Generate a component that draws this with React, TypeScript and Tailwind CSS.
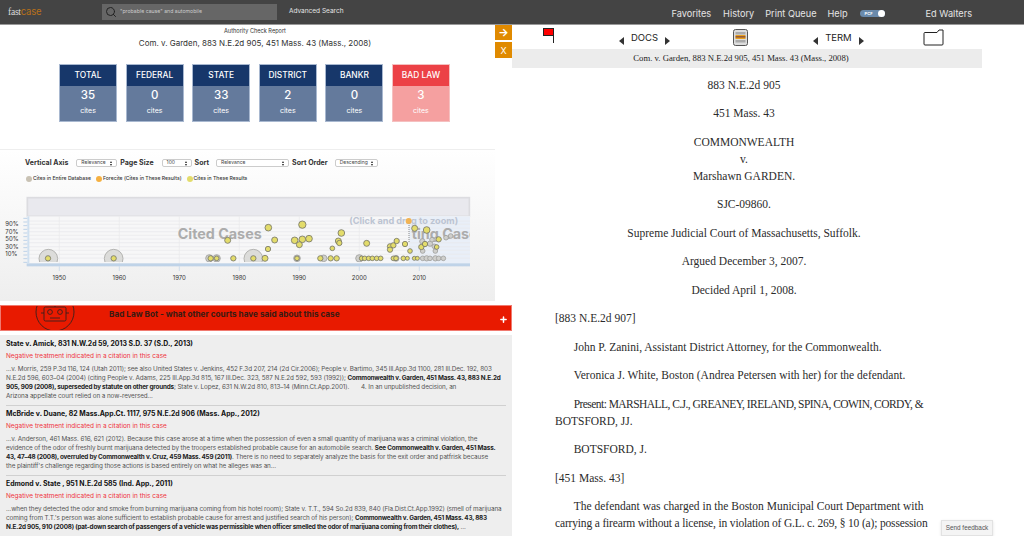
import React from 'react';
import { Search, Plus } from 'lucide-react';

const SANS = 'font-["Inter","Liberation_Sans",sans-serif]';

const tiles = [
  { label: 'TOTAL', count: 35 },
  { label: 'FEDERAL', count: 0 },
  { label: 'STATE', count: 33 },
  { label: 'DISTRICT', count: 2 },
  { label: 'BANKR', count: 0 },
  { label: 'BAD LAW', count: 3, bad: true },
];

// chart coordinates are in 3x px, the viewBox scales them back down
const yellow: [number, number, number][] = [
  [144, 334, 8], [341, 334, 8], [760, 334, 8], [632, 334, 8], [650, 334, 7], [700, 334, 8],
  [683, 280, 9], [805, 242, 10], [824, 279, 9], [804, 306, 8], [795, 334, 9],
  [907, 233, 11], [884, 280, 10], [907, 277, 10], [927, 275, 10], [898, 293, 9], [891, 334, 7],
  [1024, 258, 10], [1015, 282, 9], [1018, 288, 8], [997, 304, 7], [961, 334, 8], [992, 334, 8], [1010, 334, 8],
  [1100, 289, 9], [1170, 298, 8], [1170, 308, 8], [1180, 295, 8], [1190, 282, 8], [1215, 291, 8], [1230, 312, 7],
  [1244, 244, 9], [1280, 249, 10], [1264, 300, 8], [1275, 291, 8], [1316, 277, 8], [1310, 300, 7],
  [1085, 334, 7], [1094, 334, 7], [1106, 334, 7], [1117, 334, 7], [1130, 334, 7], [1142, 334, 7],
  [1180, 334, 7], [1188, 334, 7], [1210, 334, 7], [1222, 334, 6], [1243, 334, 6], [1252, 334, 6],
];

const gray: [number, number, number][] = [
  [628, 334, 11], [650, 334, 11], [891, 334, 10], [971, 334, 10], [1078, 334, 11], [1188, 334, 9],
  [1268, 334, 7], [1280, 334, 8], [1290, 334, 7], [1306, 334, 8], [1316, 334, 7], [1330, 334, 7],
  [1267, 283, 8], [1268, 312, 7], [1290, 290, 8], [1296, 278, 7], [1306, 312, 7], [1303, 298, 7], [1338, 272, 7], [1352, 267, 7],
];

const ChartSvg = () => (
  <svg viewBox="0 135 1536 330" width={512} height={110} className="block" style={{ fontFamily: 'Inter, sans-serif' }}>
    <defs>
      <clipPath id="plot">
        <rect x="80" y="208" width="1330" height="137" />
      </clipPath>
    </defs>
    <rect x="82" y="152" width="1326" height="56" fill="#e9e9ee" stroke="#dcdce0" strokeWidth="5" />
    <rect x="80" y="208" width="1330" height="142" fill="#f7f7f8" />
    <rect x="1227" y="208" width="183" height="142" fill="#e9eff8" />
    {[222, 232, 243, 254, 265, 276, 287, 299, 310, 322, 333].map(y => (
      <line key={y} x1="80" x2="1410" y1={y} y2={y} stroke="#e8e9ec" strokeWidth="2" />
    ))}
    {[178, 358, 538, 718, 898, 1078, 1258].map(x => (
      <line key={x} x1={x} x2={x} y1="208" y2="350" stroke="#e8e9ec" strokeWidth="2" />
    ))}
    <text x="533" y="277" fontSize="43" fontWeight="700" fill="#acacac">Cited Cases</text>
    <text x="1235" y="277" fontSize="43" fontWeight="700" fill="#acacac" clipPath="url(#plot)">ting Cases</text>
    <text x="1048" y="232" fontSize="27.5" fontWeight="700" fill="#bcc4d2">(Click and drag to zoom)</text>
    <line x1="1227" x2="1227" y1="222" y2="285" stroke="#777" strokeWidth="2.5" strokeDasharray="3 3" />
    <g clipPath="url(#plot)">
      {[145, 341, 760].map(x => (
        <circle key={x} cx={x} cy={335} r={28} fill="#dcdcda" stroke="#a9a9a7" strokeWidth="2.5" />
      ))}
      {gray.map(([x, y, r]) => (
        <circle key={`${x}-${y}`} cx={x} cy={y} r={r} fill="#cfcfcc" stroke="#a0a09e" strokeWidth="2.5" />
      ))}
      {yellow.map(([x, y, r]) => (
        <circle key={`${x}-${y}`} cx={x} cy={y} r={r} fill="#e3dc6b" stroke="#77776a" strokeWidth="2.5" />
      ))}
      <circle cx="1226" cy="222" r="9" fill="#f2b352" />
    </g>
    <rect x="80" y="349" width="1330" height="9" fill="#bfd3e8" />
    <rect x="82" y="208" width="6" height="142" fill="#cfe0f0" />
    {[214, 225, 236, 247, 258, 269, 280, 291, 302, 313, 324, 335, 346].map(y => (
      <line key={y} x1="70" x2="82" y1={y} y2={y} stroke="#bdd2e8" strokeWidth="3" />
    ))}
    {[['90%', 237], ['70%', 260], ['50%', 282], ['30%', 305], ['10%', 328]].map(([t, y]) => (
      <text key={t} x="16" y={y} fontSize="18" fill="#333">{t}</text>
    ))}
    {[178, 358, 538, 718, 898, 1078, 1258].map((x, i) => (
      <g key={x}>
        <line x1={x} x2={x} y1="358" y2="372" stroke="#bfd3e8" strokeWidth="2" />
        <text x={x} y="399" fontSize="18" fill="#333" textAnchor="middle">{1950 + i * 10}</text>
      </g>
    ))}
  </svg>
);

const Sel = ({ text, w }: { text: string; w: string }) => (
  <div className={`${w} h-[8px] flex items-center justify-between px-1 border border-[#ccc] rounded-[2px] bg-white text-[5px] font-normal text-[#444]`}>
    <span>{text}</span>
    <span className="flex flex-col gap-[1px]">
      <span className="w-0 h-0 border-x-[1.5px] border-x-transparent border-b-[2px] border-b-[#222]" />
      <span className="w-0 h-0 border-x-[1.5px] border-x-transparent border-t-[2px] border-t-[#222]" />
    </span>
  </div>
);

const Legend = ({ color, label }: { color: string; label: string }) => (
  <div className="flex items-center gap-[1px] text-[5.1px] font-medium text-[#333]">
    <span className={`w-[6px] h-[6px] rounded-full ${color}`} />
    {label}
  </div>
);

const Triangle = ({ dir }: { dir: 'l' | 'r' }) =>
  dir === 'l' ? (
    <span className="block mt-[7px] w-0 h-0 border-y-[4px] border-y-transparent border-r-[5px] border-r-[#333]" />
  ) : (
    <span className="block mt-[7px] w-0 h-0 border-y-[4px] border-y-transparent border-l-[5px] border-l-[#333]" />
  );

const Cite = ({ children }: { children: React.ReactNode }) => (
  <b className="text-[#222] tracking-[-0.2px]">{children}</b>
);

const Case = ({ title, children }: { title: string; children: React.ReactNode }) => (
  <div className="border-b border-[#d0d0d0] pb-[4px] mb-[3px] mr-[6px]">
    <h3 className="text-[6.9px] leading-[10px] font-bold text-[#111]">{title}</h3>
    <p className="text-[6.45px] leading-[9px] text-[#ee3340] mt-[3px]">Negative treatment indicated in a citation in this case</p>
    <p className="text-[6.35px] leading-[9px] tracking-[-0.1px] text-[#555] mt-[4px]">{children}</p>
  </div>
);

const Para = ({ children, className = '' }: { children: React.ReactNode; className?: string }) => (
  <p className={`mb-[11.5px] ${className}`}>{children}</p>
);

export default function App() {
  return (
    <div className={`relative w-[1024px] h-[536px] overflow-hidden bg-white ${SANS}`}>
      {/* top bar */}
      <header className="h-[25px] bg-[#444] border-b border-[#999] flex items-center text-[#e4e4e4]">
        <div className="w-[102px] pl-[8px] text-[9.5px] leading-none tracking-tight">
          <span className="font-['Liberation_Serif',serif] text-[#ddd]">fast</span>
          <span className="text-[#b8701a]">case</span>
        </div>
        <div className="w-[175px] h-[16px] bg-[#666] flex items-center pl-[3px] gap-[3px] text-[5.2px] text-[#ccc]">
          <Search size={12} strokeWidth={2} className="text-[#222]" />
          "probable cause" and automobile
        </div>
        <span className="ml-[12px] text-[6.5px]">Advanced Search</span>
        <nav className="ml-auto pt-[4px] flex items-center text-[9.2px]">
          <span>Favorites</span>
          <span className="ml-[12px]">History</span>
          <span className="ml-[11px]">Print Queue</span>
          <span className="ml-[11px]">Help</span>
          <span className="ml-[12px] w-[25px] h-[7px] rounded-full bg-[#6a8aac] flex items-center justify-between pl-[5px] text-[4px] font-bold text-white">
            PCF
            <span className="w-[7px] h-[7px] rounded-full bg-white" />
          </span>
          <span className="ml-[41px] mr-[52px]">Ed Walters</span>
        </nav>
      </header>

      <div className="flex">
        {/* left pane */}
        <div className="w-[512px] shrink-0">
          <div className="text-center pr-[2px] pt-[1px] text-[#333]">
            <p className="text-[5.6px] leading-[8px] mt-[1px]">Authority Check Report</p>
            <p className="text-[8px] leading-[12px] mt-[2px]">Com. v. Garden, 883 N.E.2d 905, 451 Mass. 43 (Mass., 2008)</p>
          </div>
          <div className="flex gap-[8.6px] ml-[59px] mt-[15px]">
            {tiles.map(t => (
              <div key={t.label} className={`w-[58px] h-[58px] text-center text-white border ${t.bad ? 'border-[#f5c0c0]' : 'border-[#a8b8d0]'}`}>
                <div className={`h-[21px] flex items-center justify-center text-[8.4px] font-medium ${t.bad ? 'bg-[#ec4146]' : 'bg-[#17376a]'}`}>{t.label}</div>
                <div className={`h-[35px] pt-[2px] ${t.bad ? 'bg-[#f5a0a0]' : 'bg-[#647a9c]'}`}>
                  <div className="text-[11.5px] font-medium leading-[14px]">{t.count}</div>
                  <div className="text-[7px] leading-[10px] mt-[4px]">cites</div>
                </div>
              </div>
            ))}
          </div>

          {/* chart */}
          <div className="mt-[27px] h-[152px] border-t border-[#eee] bg-gradient-to-b from-white to-[#eeeeee] w-[495px] overflow-hidden">
            <div className="flex items-center h-[10px] mt-[8px] ml-[25px] text-[7px] font-bold text-[#333] whitespace-nowrap">
              <span>Vertical Axis</span>
              <Sel text="Relevance" w="w-[41px] ml-[8px]" />
              <span className="ml-[3px]">Page Size</span>
              <Sel text="100" w="w-[30px] ml-[8px]" />
              <span className="ml-[3px]">Sort</span>
              <Sel text="Relevance" w="w-[73px] ml-[7px]" />
              <span className="ml-[3px]">Sort Order</span>
              <Sel text="Descending" w="w-[43px] ml-[7px]" />
            </div>
            <div className="flex items-center gap-[5px] ml-[26px] mt-[7px] whitespace-nowrap">
              <Legend color="bg-[#c9c2b4]" label="Cites in Entire Database" />
              <Legend color="bg-[#f5b041]" label="Forecite (Cites in These Results)" />
              <Legend color="bg-[#e3dc6b]" label="Cites in These Results" />
            </div>
            <div className="mt-[9px]">
              <ChartSvg />
            </div>
          </div>

          {/* bad law bot */}
          <div className="mt-[4px] h-[26px] bg-[#e81a00] border border-[#f07a70] flex items-center relative overflow-hidden">
            <svg viewBox="0 0 44 44" width={44} height={44} className="absolute left-[32px] top-[-16px]" fill="none" stroke="#222" strokeWidth="0.8">
              <circle cx="22" cy="22" r="19" />
              <rect x="11" y="17" width="22" height="14" rx="1.5" />
              <circle cx="17" cy="22" r="2.4" />
              <circle cx="27" cy="22" r="2.4" />
              <line x1="17" x2="27" y1="28" y2="28" />
              <line x1="22" x2="22" y1="13" y2="17" />
              <line x1="8" x2="11" y1="23" y2="23" />
              <line x1="33" x2="36" y1="23" y2="23" />
            </svg>
            <span className="ml-[108px] -mt-[7px] text-[8.2px] font-bold text-[#3a1a12]">Bad Law Bot - what other courts have said about this case</span>
            <Plus size={9} strokeWidth={4} className="absolute right-[3px] top-[9px] text-white" />
          </div>

          {/* results */}
          <div className="mt-[4px] h-[300px] bg-[#eeeeee] pl-[6px] pt-[4px]">
            <Case title="State v. Amick, 831 N.W.2d 59, 2013 S.D. 37 (S.D., 2013)">
              ...v. Morris, 259 P.3d 116, 124 (Utah 2011); see also United States v. Jenkins, 452 F.3d 207, 214 (2d Cir.2006); People v. Bartimo, 345 Ill.App.3d 1100, 281 Ill.Dec. 192, 803 N.E.2d 596, 603–04 (2004) (citing People v. Adams, 225 Ill.App.3d 815, 167 Ill.Dec. 323, 587 N.E.2d 592, 593 (1992)); <Cite>Commonwealth v. Garden, 451 Mass. 43, 883 N.E.2d 905, 909 (2008), superseded by statute on other grounds</Cite>; State v. Lopez, 631 N.W.2d 810, 813–14 (Minn.Ct.App.2001). &nbsp; &nbsp; &nbsp; 4. In an unpublished decision, an<br />Arizona appellate court relied on a now-reversed...
            </Case>
            <Case title="McBride v. Duane, 82 Mass.App.Ct. 1117, 975 N.E.2d 906 (Mass. App., 2012)">
              ...v. Anderson, 461 Mass. 616, 621 (2012). Because this case arose at a time when the possession of even a small quantity of marijuana was a criminal violation, the<br />evidence of the odor of freshly burnt marijuana detected by the troopers established probable cause for an automobile search. <Cite>See Commonwealth v. Garden, 451 Mass.<br />43, 47–48 (2008), overruled by Commonwealth v. Cruz, 459 Mass. 459 (2011)</Cite>. There is no need to separately analyze the basis for the exit order and patfrisk because<br />the plaintiff's challenge regarding those actions is based entirely on what he alleges was an...
            </Case>
            <Case title="Edmond v. State , 951 N.E.2d 585 (Ind. App., 2011)">
              ...when they detected the odor and smoke from burning marijuana coming from his hotel room); State v. T.T., 594 So.2d 839, 840 (Fla.Dist.Ct.App.1992) (smell of marijuana coming from T.T.'s person was alone sufficient to establish probable cause for arrest and justified search of his person); <Cite>Commonwealth v. Garden, 451 Mass. 43, 883 N.E.2d 905, 910 (2008) (pat-down search of passengers of a vehicle was permissible when officer smelled the odor of marijuana coming from their clothes),</Cite> ...
            </Case>
          </div>
        </div>

        {/* document pane */}
        <div className="flex-1 min-w-0">
          <div className="h-[24px] w-[470px] flex items-center text-[9.5px] text-[#222]">
            <svg viewBox="0 0 12 16" width={12} height={16} className="ml-[31px] -mt-[2px]">
              <rect x="0.5" y="0.5" width="10" height="7" fill="#f00" stroke="#222" />
              <line x1="10.5" x2="10.5" y1="0" y2="15" stroke="#222" />
            </svg>
            <span className="ml-[64px]"><Triangle dir="l" /></span>
            <span className="ml-[7px] mt-[2px]">DOCS</span>
            <span className="ml-[7px]"><Triangle dir="r" /></span>
            <svg viewBox="0 0 15 17" width={15} height={17} className="ml-[63px]">
              <rect x="0.5" y="0.5" width="14" height="16" rx="2" fill="#ddd" stroke="#555" />
              <rect x="2.5" y="3" width="10" height="2.5" fill="#aaa" />
              <rect x="2.5" y="6" width="10" height="4" fill="#e8a020" />
              <rect x="2.5" y="7.4" width="10" height="1" fill="#634" />
              <rect x="2.5" y="11" width="10" height="2.5" fill="#aaa" />
            </svg>
            <span className="ml-[65px]"><Triangle dir="l" /></span>
            <span className="ml-[7px] mt-[2px]">TERM</span>
            <span className="ml-[7px]"><Triangle dir="r" /></span>
            <svg viewBox="0 0 21 17" width={21} height={17} className="ml-[59px]" fill="none" stroke="#222">
              <path d="M2 3.5h12l2-2.5h4v14a1 1 0 0 1-1 1H2a1 1 0 0 1-1-1V4.5a1 1 0 0 1 1-1z" />
            </svg>
          </div>
          <div className="h-[19px] w-[470px] pr-[12px] bg-[#ececec] flex items-center justify-center font-['Liberation_Serif',serif] text-[8.7px] text-[#222]">
            Com. v. Garden, 883 N.E.2d 905, 451 Mass. 43 (Mass., 2008)
          </div>
          <div className="w-[373px] ml-[43px] mt-[8.5px] font-['Liberation_Serif',serif] text-[11.5px] leading-[17px] text-[#2b2b2b]">
            <div className="text-center pl-[5px]">
              <Para>883 N.E.2d 905</Para>
              <Para>451 Mass. 43</Para>
              <Para>COMMONWEALTH<br />v.<br />Marshawn GARDEN.</Para>
              <Para>SJC-09860.</Para>
              <Para>Supreme Judicial Court of Massachusetts, Suffolk.</Para>
              <Para>Argued December 3, 2007.</Para>
              <Para>Decided April 1, 2008.</Para>
            </div>
            <Para>[883 N.E.2d 907]</Para>
            <Para className="indent-[18.7px]">John P. Zanini, Assistant District Attorney, for the Commonwealth.</Para>
            <Para className="indent-[18.7px]">Veronica J. White, Boston (Andrea Petersen with her) for the defendant.</Para>
            <Para className="indent-[18.7px] whitespace-nowrap">
              <span className="tracking-[-0.55px]">Present: MARSHALL, C.J., GREANEY, IRELAND, SPINA, COWIN, CORDY, &amp;</span>
              <br />
              BOTSFORD, JJ.
            </Para>
            <Para className="indent-[18.7px]">BOTSFORD, J.</Para>
            <Para>[451 Mass. 43]</Para>
            <Para className="indent-[18.7px] whitespace-nowrap">
              The defendant was charged in the Boston Municipal Court Department with
              <br />
              <span className="tracking-[-0.16px]">carrying a firearm without a license, in violation of G.L. c. 269, § 10 (a); possession</span>
            </Para>
          </div>
        </div>
      </div>

      {/* pane controls */}
      <div className="absolute left-[495px] top-[25px] flex flex-col gap-[2px] text-white">
        <div className="w-[17px] h-[15px] bg-[#e08a00] flex items-center justify-center text-[11px] font-bold leading-none">→</div>
        <div className="w-[17px] h-[16px] bg-[#e08a00] flex items-center justify-center text-[9px] leading-none">X</div>
      </div>
      <div className="absolute left-[941px] top-[520px] w-[52px] h-[16px] bg-[#f4f4f4] border border-[#e2e2e2] shadow-sm flex items-center justify-center font-['Liberation_Sans',sans-serif] text-[6.4px] text-[#555]">
        Send feedback
      </div>
    </div>
  );
}
